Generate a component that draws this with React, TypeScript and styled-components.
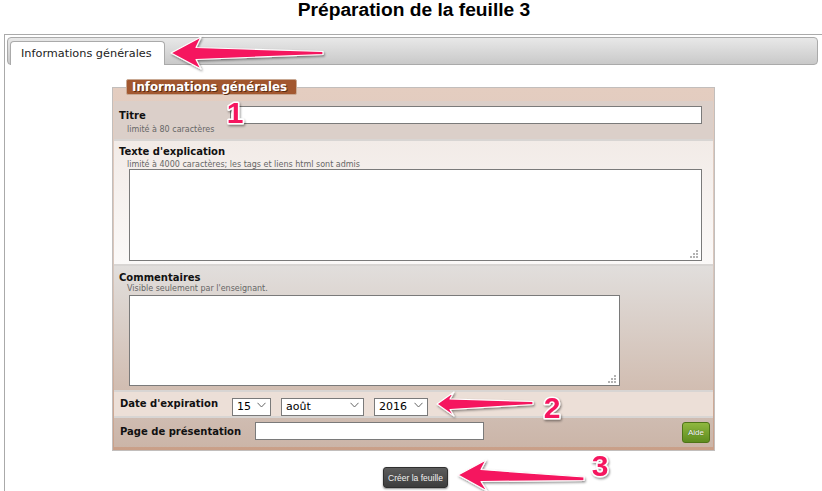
import React from "react";
import styled, { createGlobalStyle } from "styled-components";

const GlobalStyle = createGlobalStyle`
  html, body { margin: 0; padding: 0; background: #fff; }
  body { font-family: "DejaVu Sans", Verdana, sans-serif; }
  * { box-sizing: border-box; }
`;

const Page = styled.div`
  position: relative;
  width: 822px;
  height: 491px;
  overflow: hidden;
`;

const Title = styled.h1`
  margin: 0;
  height: 34px;
  padding-left: 6px;
  font: bold 19.2px/20px "Liberation Sans", Arial, sans-serif;
  color: #000;
  text-align: center;
`;

const Frame = styled.div`
  margin: 0 -2px 0 4px;
  height: 470px;
  border: 1px solid #aaa;
  border-bottom: none;
  padding: 2px;
`;

const TabBar = styled.div`
  display: flex;
  align-items: flex-end;
  height: 28px;
  margin: 0 3px 0 0;
  padding: 3px 0 0 2px;
  border: 1px solid #aaa;
  border-radius: 4px;
  background: linear-gradient(#e8e8e8, #c9c9c9);
`;

const Tab = styled.div`
  width: 155px;
  height: 24px;
  margin-bottom: -1px;
  padding-left: 10px;
  border: 1px solid #aaa;
  border-bottom: none;
  border-radius: 4px 4px 0 0;
  background: #fff;
  color: #222;
  font-size: 11.3px;
  line-height: 23px;
  white-space: nowrap;
`;

const Fieldset = styled.fieldset`
  width: 603px;
  min-width: 0;
  margin: 14px 0 0 105px;
  padding: 6px 1px 3px;
  border: 1px solid #c2bebc;
  background: linear-gradient(#e4cdc0, #d8c6bc 50%, #c99f88);
`;

const Legend = styled.legend`
  margin-left: 12px;
  height: 16px;
  padding: 0 9px 0 5px;
  border: 1px solid #c9a994;
  border-radius: 2px;
  background: #a2572f;
  color: #fff;
  font-weight: bold;
  font-size: 11.8px;
  line-height: 14px;
  text-shadow: 1px 1px 0 #5b2b12;
`;

const Row = styled.div<{ $bg: string; $first?: boolean }>`
  display: flex;
  border-top: ${(p) => (p.$first ? "none" : "2px solid #d8d5d3")};
  background: ${(p) => p.$bg};
`;

const StackRow = styled(Row)<{ $pt: number; $pb: number }>`
  flex-direction: column;
  padding: ${(p) => `${p.$pt}px 12px ${p.$pb}px 5px`};
`;

const TitleRow = styled(Row)`
  height: 38px;
  padding: 5px 11px 0 5px;
`;

const InlineRow = styled(Row)<{ $h: number }>`
  height: ${(p) => p.$h}px;
  align-items: flex-start;
  padding: 3px 3px 0 6px;
`;

const LabelCol = styled.div<{ $w: number }>`
  width: ${(p) => p.$w}px;
  flex: none;
  padding-top: 4px;
`;

const Label = styled.div<{ $w?: number; $lh?: number }>`
  ${(p) => (p.$w ? `width: ${p.$w}px; flex: none;` : "")}
  color: #111;
  font-weight: bold;
  font-size: 10px;
  line-height: ${(p) => p.$lh ?? 12}px;
  white-space: nowrap;
`;

const Hint = styled.div<{ $mt?: number }>`
  margin-top: ${(p) => p.$mt ?? 0}px;
  padding-left: 8px;
  color: #666;
  font-size: 8px;
  line-height: 9px;
  white-space: nowrap;
`;

const TextInput = styled.input<{ $w?: number }>`
  ${(p) => (p.$w ? `width: ${p.$w}px;` : "flex: 1;")}
  height: 18px;
  margin: 0;
  padding: 0 3px;
  border: 1px solid #7a7a7a;
  background: #fff;
  font: 11px "DejaVu Sans", Verdana, sans-serif;
`;

const PageInput = styled(TextInput)`
  margin-top: 1px;
`;

const AreaWrap = styled.div<{ $w: number; $h: number; $mt: number }>`
  position: relative;
  width: ${(p) => p.$w}px;
  height: ${(p) => p.$h}px;
  margin: ${(p) => p.$mt}px 0 0 10px;
  &::after {
    content: "";
    position: absolute;
    right: 4px;
    bottom: 9px;
    width: 2px;
    height: 2px;
    background: #b3b3b3;
    box-shadow: 0 3px #b3b3b3, -3px 3px #b3b3b3, 0 6px #b3b3b3,
      -3px 6px #b3b3b3, -6px 6px #b3b3b3;
  }
`;

const TextArea = styled.textarea`
  display: block;
  width: 100%;
  height: 100%;
  margin: 0;
  border: 1px solid #7a7a7a;
  background: #fff;
  resize: none;
  outline: none;
`;

const SelectGroup = styled.div`
  display: flex;
  gap: 10px;
`;

const SelectWrap = styled.div<{ $w: number }>`
  position: relative;
  width: ${(p) => p.$w}px;
  height: 18px;
`;

const Select = styled.select`
  width: 100%;
  height: 18px;
  margin: 0;
  padding: 0 0 0 4px;
  appearance: none;
  border: 1px solid #7a7a7a;
  border-radius: 0;
  background: #fff;
  color: #000;
  font: 11px/16px "DejaVu Sans", Verdana, sans-serif;
`;

const Chevron = styled.svg`
  position: absolute;
  right: 5px;
  top: 7px;
  width: 9px;
  height: 6px;
  pointer-events: none;
`;

const Spacer = styled.div`
  flex: 1;
`;

const AideButton = styled.button`
  width: 28px;
  height: 21px;
  margin: 1px 0 0;
  padding: 0;
  border: 1px solid #4e7417;
  border-radius: 3px;
  background: linear-gradient(#8fb83f, #5f8c1f);
  color: #fff;
  font: 8px "Liberation Sans", Arial, sans-serif;
  text-shadow: 0 0 1px #2f4a0a;
`;

const Footer = styled.div`
  display: flex;
  justify-content: center;
  padding: 16px 0 0 3px;
`;

const CreateButton = styled.button`
  width: 65px;
  height: 21px;
  margin: 0;
  padding: 0;
  border: 1px solid #2f2f2f;
  border-radius: 3px;
  background: linear-gradient(#5c5c5c, #3d3d3d);
  box-shadow: 0 1px 2px rgba(0, 0, 0, 0.45);
  color: #f2f2f2;
  font: 8.5px "Liberation Sans", Arial, sans-serif;
`;

const Annotations = styled.svg`
  position: absolute;
  left: 0;
  top: 0;
  pointer-events: none;
`;

const NumberText = styled.text`
  font: bold 30px "Liberation Sans", Arial, sans-serif;
  fill: #f5175f;
  stroke: #fff;
  stroke-width: 3px;
  paint-order: stroke;
  stroke-linejoin: round;
`;

const PINK = "#f5175f";

function Dropdown({ w, value }: { w: number; value: string }) {
  return (
    <SelectWrap $w={w}>
      <Select defaultValue={value}>
        <option>{value}</option>
      </Select>
      <Chevron viewBox="0 0 9 6">
        <path d="M0.5 0.8 L4.5 5 L8.5 0.8" fill="none" stroke="#666" strokeWidth="1" />
      </Chevron>
    </SelectWrap>
  );
}

export default function App() {
  return (
    <>
      <GlobalStyle />
      <Page>
        <Title>Préparation de la feuille 3</Title>
        <Frame>
          <TabBar>
            <Tab>Informations générales</Tab>
          </TabBar>
          <Fieldset>
            <Legend>Informations générales</Legend>
            <TitleRow $bg="#dbcfc9" $first>
              <LabelCol $w={111}>
                <Label>Titre</Label>
                <Hint $mt={3}>limité à 80 caractères</Hint>
              </LabelCol>
              <TextInput />
            </TitleRow>
            <StackRow $bg="linear-gradient(#f2ebe7, #fbf9f8)" $pt={5} $pb={3}>
              <Label>Texte d'explication</Label>
              <Hint $mt={2}>limité à 4000 caractères; les tags et liens html sont admis</Hint>
              <AreaWrap $w={573} $h={92} $mt={0}>
                <TextArea />
              </AreaWrap>
            </StackRow>
            <StackRow $bg="linear-gradient(#e1dedc, #d1bdb1)" $pt={6} $pb={4}>
              <Label>Commentaires</Label>
              <Hint>Visible seulement par l'enseignant.</Hint>
              <AreaWrap $w={491} $h={91} $mt={2}>
                <TextArea />
              </AreaWrap>
            </StackRow>
            <InlineRow $bg="#ecdfd7" $h={26}>
              <Label $w={112} $lh={18}>Date d'expiration</Label>
              <SelectGroup>
                <Dropdown w={39} value="15" />
                <Dropdown w={83} value="août" />
                <Dropdown w={54} value="2016" />
              </SelectGroup>
            </InlineRow>
            <InlineRow $bg="linear-gradient(#cfbcb1, #cbb5a8)" $h={31}>
              <Label $w={135} $lh={21}>Page de présentation</Label>
              <PageInput $w={229} />
              <Spacer />
              <AideButton>Aide</AideButton>
            </InlineRow>
          </Fieldset>
          <Footer>
            <CreateButton>Créer la feuille</CreateButton>
          </Footer>
        </Frame>
        <Annotations width={822} height={491} viewBox="0 0 822 491">
          <defs>
            <filter id="shadow" x="-20%" y="-50%" width="140%" height="200%">
              <feDropShadow dx="1" dy="1.5" stdDeviation="1.2" floodColor="#000" floodOpacity="0.45" />
            </filter>
          </defs>
          <g fill={PINK} stroke="#fff" strokeWidth="1.2" strokeLinejoin="round" filter="url(#shadow)">
            <path d="M171 53 L201 37 L196 47.5 L323 51.5 L323 54.5 L196 59.5 L201 69 Z" />
            <path d="M437 404 L454 392 L450 399 L533 401.5 L533 404.5 L450 409.5 L454 416 Z" />
            <path d="M458 475 L486 460 L481 469.5 L584 477 L584 480.5 L481 481.5 L487 491 Z" />
          </g>
          <g filter="url(#shadow)">
            <NumberText x={235} y={123} textAnchor="middle">1</NumberText>
            <NumberText x={552} y={418} textAnchor="middle">2</NumberText>
            <NumberText x={600} y={476} textAnchor="middle">3</NumberText>
          </g>
        </Annotations>
      </Page>
    </>
  );
}
